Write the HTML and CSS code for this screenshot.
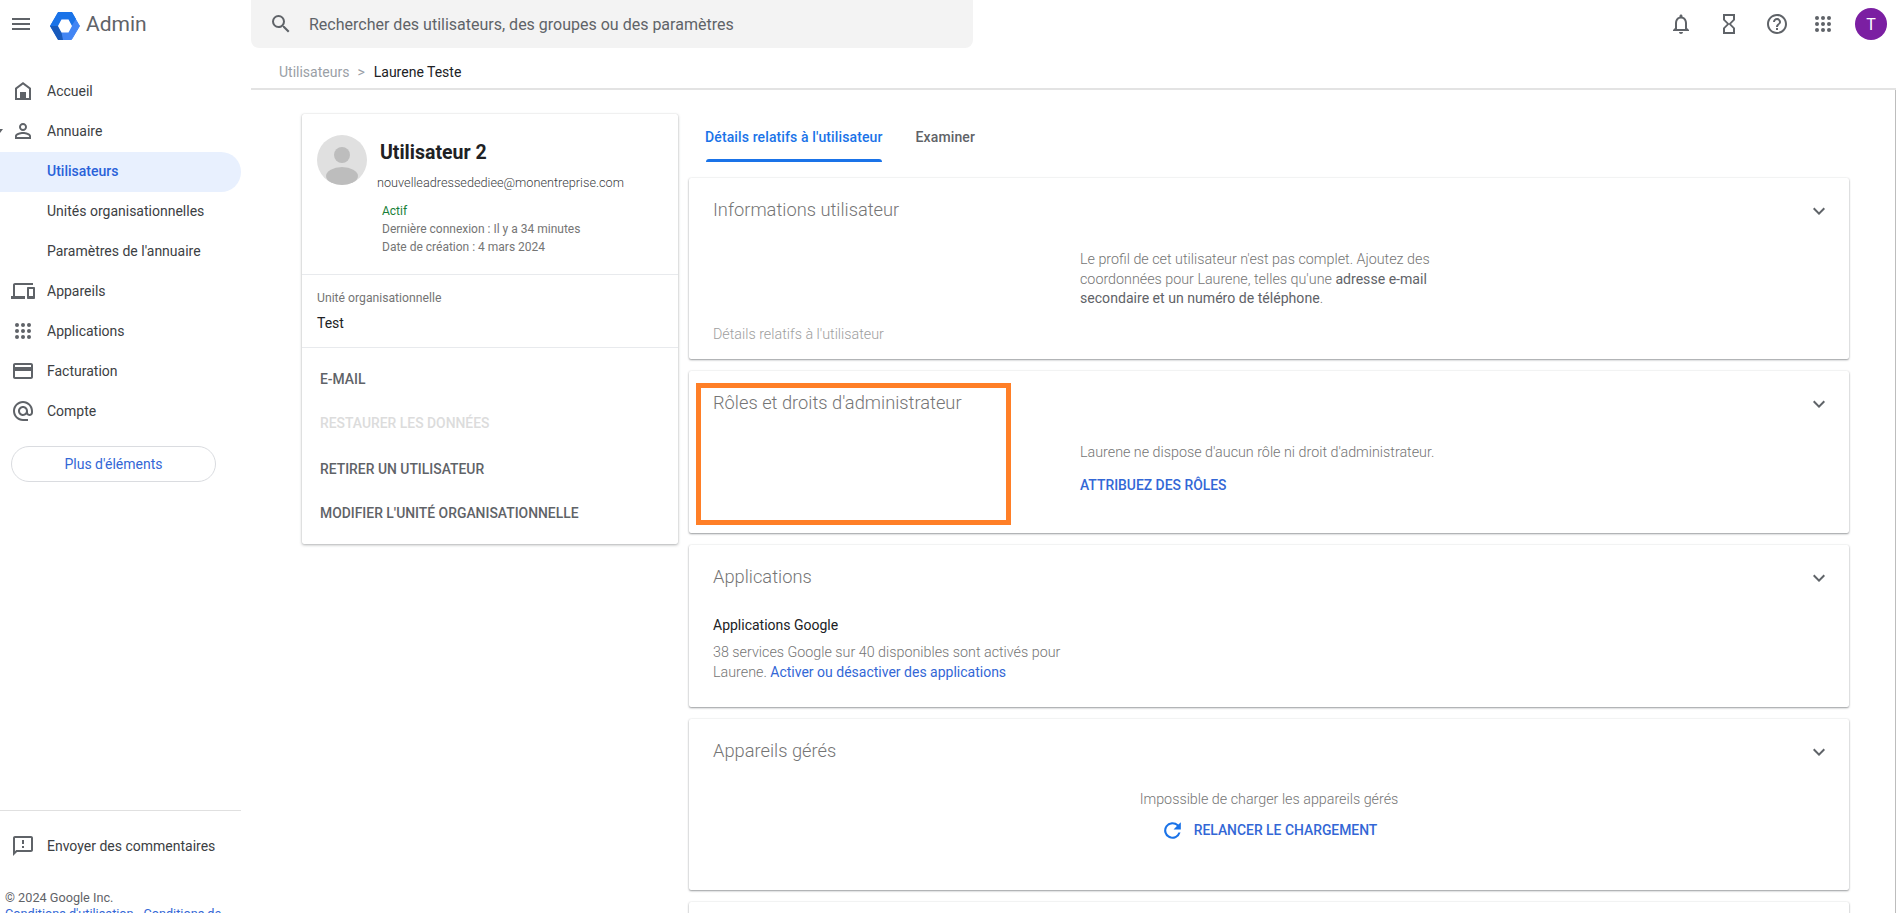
FILE: index.html
```html
<!DOCTYPE html>
<html lang="fr">
<head>
<meta charset="utf-8">
<title>Admin</title>
<link rel="stylesheet" href="styles.css">
</head>
<body>
<div class="app">
  <aside class="side">
    <div class="brand">
      <svg class="menu" viewBox="0 0 18 12"><path d="M0 0h18v2H0zM0 5h18v2H0zM0 10h18v2H0z"/></svg>
      <svg class="logo" viewBox="0 0 30 28"><path fill="#4285f4" stroke="#4285f4" stroke-width="1" stroke-linejoin="round" d="M8.500 .5h13L29.500 14l-8 13.500h-13L.5 14z"/><path fill="#1a73e8" d="M8 0h14l4 7-4.500 7-3-6.500h-7L8 14H0z"/><path fill="#185abc" d="M0 14h8l3.500 6.500 1.500 7.500H8z"/><path fill="#fff" d="M11.500 7.500h7l3.500 6.500-3.500 6.500h-7L8 14z"/></svg>
      <span class="brand-name">Admin</span>
    </div>
    <nav class="nav">
      <a class="nav-item"><svg class="ico" viewBox="0 0 24 24"><path d="M12 3 4 9v12h16V9zm6 16h-3v-6H9v6H6v-9l6-4.500 6 4.500z"/><path d="M10 14h4v6h-4z"/></svg>Accueil</a>
      <a class="nav-item"><span class="caret"></span><svg class="ico" viewBox="0 0 24 24"><path d="M12 5.900a2.100 2.100 0 1 1 0 4.200 2.100 2.100 0 0 1 0-4.200m0 9c2.970 0 6.100 1.460 6.100 2.100v1.100H5.900V17c0-.64 3.130-2.100 6.100-2.100M12 4C9.790 4 8 5.790 8 8s1.790 4 4 4 4-1.790 4-4-1.790-4-4-4zm0 9c-2.670 0-8 1.340-8 4v3h16v-3c0-2.660-5.330-4-8-4z"/></svg>Annuaire</a>
      <a class="nav-item sub active">Utilisateurs</a>
      <a class="nav-item sub">Unités organisationnelles</a>
      <a class="nav-item sub">Paramètres de l'annuaire</a>
      <a class="nav-item"><svg class="ico" viewBox="0 0 24 24"><path d="M4 6h18V4H4c-1.100 0-2 .9-2 2v11H0v3h14v-3H4V6zm19 2h-6c-.55 0-1 .45-1 1v10c0 .55.45 1 1 1h6c.55 0 1-.45 1-1V9c0-.55-.45-1-1-1zm-1 9h-4v-7h4v7z"/></svg>Appareils</a>
      <a class="nav-item"><svg class="ico" viewBox="0 0 24 24"><circle cx="6" cy="6" r="2"/><circle cx="12" cy="6" r="2"/><circle cx="18" cy="6" r="2"/><circle cx="6" cy="12" r="2"/><circle cx="12" cy="12" r="2"/><circle cx="18" cy="12" r="2"/><circle cx="6" cy="18" r="2"/><circle cx="12" cy="18" r="2"/><circle cx="18" cy="18" r="2"/></svg>Applications</a>
      <a class="nav-item"><svg class="ico" viewBox="0 0 24 24"><path d="M20 4H4c-1.110 0-1.990.89-1.990 2L2 18c0 1.110.89 2 2 2h16c1.110 0 2-.89 2-2V6c0-1.110-.89-2-2-2zm0 14H4v-6h16v6zm0-10H4V6h16v2z"/></svg>Facturation</a>
      <a class="nav-item"><svg class="ico" viewBox="0 0 24 24"><path d="M12 2C6.480 2 2 6.480 2 12s4.480 10 10 10h5v-2h-5c-4.340 0-8-3.660-8-8s3.660-8 8-8 8 3.660 8 8v1.430c0 .79-.71 1.570-1.500 1.570s-1.500-.78-1.500-1.570V12c0-2.760-2.240-5-5-5s-5 2.240-5 5 2.240 5 5 5c1.380 0 2.640-.56 3.540-1.470.65.89 1.770 1.470 2.960 1.470 1.970 0 3.500-1.600 3.500-3.570V12c0-5.520-4.480-10-10-10zm0 13c-1.660 0-3-1.340-3-3s1.340-3 3-3 3 1.340 3 3-1.340 3-3 3z"/></svg>Compte</a>
    </nav>
    <button class="more">Plus d'éléments</button>
    <div class="side-spacer"></div>
    <a class="nav-item feedback"><svg class="ico" viewBox="0 0 24 24"><path d="M20 2H4c-1.100 0-1.990.9-1.990 2L2 22l4-4h14c1.100 0 2-.9 2-2V4c0-1.100-.9-2-2-2zm0 14H5.170L4 17.170V4h16v12zm-9-4h2v2h-2zm0-6h2v4h-2z"/></svg>Envoyer des commentaires</a>
    <div class="legal">
      <div>© 2024 Google Inc.</div>
      <div class="legal-links">Conditions d'utilisation - Conditions de</div>
    </div>
  </aside>

  <main class="main">
    <header class="top">
      <div class="search">
        <svg class="search-ico" viewBox="0 0 24 24"><path d="M15.500 14h-.79l-.28-.27A6.471 6.471 0 0 0 16 9.500 6.500 6.500 0 1 0 9.500 16c1.610 0 3.090-.59 4.230-1.570l.27.28v.79l5 4.990L20.490 19l-4.990-5zm-6 0C7.010 14 5 11.990 5 9.500S7.010 5 9.500 5 14 7.010 14 9.500 11.990 14 9.500 14z"/></svg>
        <span>Rechercher des utilisateurs, des groupes ou des paramètres</span>
      </div>
      <div class="top-icons">
        <svg class="top-ico" viewBox="0 0 24 24"><path d="M12 22c1.100 0 2-.9 2-2h-4c0 1.100.9 2 2 2zm6-6v-5c0-3.070-1.630-5.640-4.500-6.320V4c0-.83-.67-1.500-1.500-1.500s-1.500.67-1.500 1.500v.68C7.640 5.360 6 7.920 6 11v5l-2 2v1h16v-1l-2-2zm-2 1H8v-6c0-2.480 1.510-4.500 4-4.500s4 2.020 4 4.500v6z"/></svg>
        <svg class="top-ico" viewBox="0 0 24 24"><path d="M6 2v6h.01L6 8.010 10 12l-4 4 .01.01H6V22h12v-5.990h-.01L18 16l-4-4 4-3.990-.01-.01H18V2H6zm10 14.500V20H8v-3.500l4-4 4 4zm-4-5-4-4V4h8v3.500l-4 4z"/></svg>
        <svg class="top-ico gap-help" viewBox="0 0 24 24"><path d="M11 18h2v-2h-2v2zm1-16C6.480 2 2 6.480 2 12s4.480 10 10 10 10-4.480 10-10S17.520 2 12 2zm0 18c-4.410 0-8-3.590-8-8s3.590-8 8-8 8 3.590 8 8-3.590 8-8 8zm0-14c-2.210 0-4 1.790-4 4h2c0-1.100.9-2 2-2s2 .9 2 2c0 2-3 1.750-3 5h2c0-2.250 3-2.500 3-5 0-2.210-1.790-4-4-4z"/></svg>
        <svg class="top-ico gap-apps" viewBox="0 0 24 24"><circle cx="6" cy="6" r="2"/><circle cx="12" cy="6" r="2"/><circle cx="18" cy="6" r="2"/><circle cx="6" cy="12" r="2"/><circle cx="12" cy="12" r="2"/><circle cx="18" cy="12" r="2"/><circle cx="6" cy="18" r="2"/><circle cx="12" cy="18" r="2"/><circle cx="18" cy="18" r="2"/></svg>
        <div class="avatar-t">T</div>
      </div>
    </header>
    <div class="crumb"><span class="crumb-link">Utilisateurs</span><span class="crumb-sep">&gt;</span><span class="crumb-cur">Laurene Teste</span></div>

    <div class="content">
      <section class="profile">
        <div class="profile-head">
          <svg class="avatar" viewBox="0 0 50 50"><circle cx="25" cy="25" r="25" fill="#e0e0e0"/><circle cx="25" cy="20" r="8" fill="#bdbdbd"/><ellipse cx="25" cy="41" rx="16" ry="9" fill="#bdbdbd"/></svg>
          <div class="profile-id">
            <div class="name">Utilisateur 2</div>
            <div class="mail">nouvelleadressedediee@monentreprise.com</div>
            <div class="meta">
              <div class="status">Actif</div>
              <div>Dernière connexion : Il y a 34 minutes</div>
              <div>Date de création : 4 mars 2024</div>
            </div>
          </div>
        </div>
        <div class="org">
          <div class="org-label">Unité organisationnelle</div>
          <div class="org-value">Test</div>
        </div>
        <div class="actions">
          <a class="action a1">E-MAIL</a>
          <a class="action a2 disabled">RESTAURER LES DONNÉES</a>
          <a class="action a3">RETIRER UN UTILISATEUR</a>
          <a class="action a4">MODIFIER L'UNITÉ ORGANISATIONNELLE</a>
        </div>
      </section>

      <div class="details">
        <div class="tabs">
          <a class="tab selected">Détails relatifs à l'utilisateur</a>
          <a class="tab">Examiner</a>
        </div>

        <section class="card c1">
          <div class="card-head"><h2>Informations utilisateur</h2><svg class="chev" viewBox="0 0 12 8"><path d="M1.400.6 6 5.200 10.600.6 12 2 6 8 0 2z"/></svg></div>
          <div class="split">
            <div class="info-foot">Détails relatifs à l'utilisateur</div>
            <p class="copy">Le profil de cet utilisateur n'est pas complet. Ajoutez des coordonnées pour Laurene, telles qu'une <b>adresse e-mail secondaire et un numéro de téléphone</b>.</p>
          </div>
        </section>

        <section class="card c2">
          <div class="highlight"></div>
          <div class="card-head"><h2>Rôles et droits d'administrateur</h2><svg class="chev" viewBox="0 0 12 8"><path d="M1.400.6 6 5.200 10.600.6 12 2 6 8 0 2z"/></svg></div>
          <div class="split">
            <div></div>
            <div class="roles">
              <p class="copy one">Laurene ne dispose d'aucun rôle ni droit d'administrateur.</p>
              <a class="cta">ATTRIBUEZ DES RÔLES</a>
            </div>
          </div>
        </section>

        <section class="card c3">
          <div class="card-head"><h2>Applications</h2><svg class="chev" viewBox="0 0 12 8"><path d="M1.400.6 6 5.200 10.600.6 12 2 6 8 0 2z"/></svg></div>
          <div class="apps">
            <div class="apps-title">Applications Google</div>
            <p class="copy apps-text">38 services Google sur 40 disponibles sont activés pour Laurene. <a class="link">Activer ou désactiver des applications</a></p>
          </div>
        </section>

        <section class="card c4">
          <div class="card-head"><h2>Appareils gérés</h2><svg class="chev" viewBox="0 0 12 8"><path d="M1.400.6 6 5.200 10.600.6 12 2 6 8 0 2z"/></svg></div>
          <div class="devices">
            <div class="copy one">Impossible de charger les appareils gérés</div>
            <a class="cta reload"><svg class="reload-ico" viewBox="0 0 24 24"><path d="M17.650 6.350A8 8 0 1 0 19.730 14h-2.080A6 6 0 1 1 12 6c1.660 0 3.140.69 4.220 1.780L13 11h7V4z"/></svg>RELANCER LE CHARGEMENT</a>
          </div>
        </section>

        <section class="card c5"></section>
      </div>
    </div>
  </main>
</div>
</body>
</html>
```

FILE: styles.css
```css
* { box-sizing: border-box; }
html, body { margin: 0; height: 100%; overflow: hidden; background: #fff; }
body { font-family: Roboto, "Liberation Sans", sans-serif; color: #202124; }
a { display: block; }
p { margin: 0; }
h2 { margin: 0; font-weight: 300; }

.app { display: flex; height: 913px; overflow: hidden; }

/* Sidebar */
.side { width: 251px; flex: none; display: flex; flex-direction: column; height: 913px; overflow: hidden; }
.brand { display: flex; align-items: center; height: 48px; flex: none; padding-left: 12px; }
.menu { width: 18px; height: 12px; fill: #5f6368; }
.logo { width: 30px; height: 28px; margin: 3px 0 0 20px; }
.brand-name { font-size: 21px; color: #5f6368; margin-left: 6px; }
.nav { display: flex; flex-direction: column; width: 241px; padding-top: 24px; }
.nav-item { position: relative; display: flex; align-items: center; height: 40px; font-size: 14px; color: #3c4043; padding: 0 0 2px 47px; width: 241px; flex: none; }
.ico { position: absolute; left: 11px; top: 7px; width: 24px; height: 24px; fill: #5f6368; }
.caret { position: absolute; left: -3px; top: 17px; border: 3px solid transparent; border-top: 4px solid #5f6368; }
.active { background: #e8f0fe; color: #2962d9; font-weight: 500; border-radius: 0 20px 20px 0; }
.more { width: 205px; height: 36px; margin: 14px 0 0 11px; flex: none; background: #fff; border: 1px solid #dadce0; border-radius: 18px; color: #3367d6; font: 400 14px Roboto, sans-serif; padding: 0; }
.side-spacer { flex: 1; }
.feedback { border-top: 1px solid #e0e0e0; height: 80px; padding-bottom: 9px; }
.feedback .ico { top: 23px; }
.legal { height: 23px; flex: none; padding-left: 5px; font-size: 12.700px; line-height: 16px; color: #5f6368; overflow: hidden; }
.legal-links { color: #3367d6; white-space: nowrap; }

/* Main */
.main { flex: 1; min-width: 0; display: flex; flex-direction: column; height: 913px; }
.top { display: flex; align-items: flex-start; height: 48px; flex: none; }
.search { display: flex; align-items: center; width: 722px; height: 48px; background: #f3f3f3; border-radius: 0 0 8px 8px; padding-left: 18px; color: #5f6368; font-size: 16px; flex: none; }
.search-ico { width: 24px; height: 24px; fill: #5f6368; margin-right: 16px; }
.top-icons { margin-left: auto; display: flex; align-items: center; height: 48px; }
.top-ico { width: 24px; height: 24px; fill: #5f6368; margin-right: 24px; }
.gap-help { margin-right: 22px; }
.gap-apps { margin-right: 20px; }
.avatar-t { width: 32px; height: 32px; border-radius: 50%; background: #7b1fa2; color: #fff; font-size: 16px; display: flex; align-items: center; justify-content: center; margin-right: 9px; }
.crumb { display: flex; align-items: center; height: 42px; flex: none; border-bottom: 2px solid #e3e3e3; padding: 7px 0 0 28px; font-size: 14px; }
.crumb-link { color: #9aa0a6; }
.crumb-sep { color: #9aa0a6; margin: 0 9px 0 8px; font-size: 14px; }
.crumb-cur { color: #202124; }

.content { flex: 1; display: flex; align-items: flex-start; gap: 11px; padding: 24px 0 0 51px; border-right: 1px solid #bdbdbd; min-height: 0; overflow: hidden; }

/* Profile card */
.profile { width: 376px; height: 430px; flex: none; background: #fff; border-radius: 2px; box-shadow: 0 1px 3px rgba(60,64,67,.4), 0 0 1px rgba(60,64,67,.2); }
.profile-head { display: flex; height: 161px; border-bottom: 1px solid #e8eaed; padding: 21px 0 0 15px; }
.avatar { width: 50px; height: 50px; flex: none; }
.profile-id { margin-left: 10px; }
.name { font-size: 19.500px; font-weight: 700; line-height: 22px; margin: 7px 0 0 3px; color: #202124; }
.mail { font-size: 12.700px; line-height: 18px; margin-top: 10px; color: #3c4043; white-space: nowrap; font-weight: 300; }
.meta { margin: 10px 0 0 5px; font-size: 12px; line-height: 18px; color: #757575; }
.status { color: #188038; }
.org { height: 73px; border-bottom: 1px solid #e8eaed; padding: 14px 0 0 15px; }
.org-label { font-size: 12.200px; line-height: 18px; color: #757575; }
.org-value { font-size: 14px; line-height: 18px; margin-top: 7px; color: #202124; }
.actions { padding-left: 18px; }
.action { font-size: 13.900px; font-weight: 500; line-height: 16px; color: #5f6368; }
.a1 { margin-top: 23px; }
.a2 { margin-top: 28px; }
.a3 { margin-top: 30px; }
.a4 { margin-top: 28px; }
.disabled { color: #dcdcdc; }

/* Tabs + cards */
.details { width: 1160px; flex: none; display: flex; flex-direction: column; height: 900px; }
.tabs { display: flex; height: 48px; margin: -1px 0 17px; padding-left: 16px; flex: none; }
.tab { font-size: 14px; font-weight: 500; letter-spacing: .12px; line-height: 16px; color: #5f6368; padding-top: 16px; margin-right: 33px; height: 49px; }
.tab.selected { color: #1a73e8; position: relative; }
.tab.selected::after { content: ""; position: absolute; left: 1px; right: 1px; bottom: 0; height: 3px; background: #1a73e8; border-radius: 3px 3px 0 0; }
.card { position: relative; background: #fff; border-radius: 2px; box-shadow: 0 1px 2px rgba(60,64,67,.5), 0 0 2px rgba(60,64,67,.12); margin-bottom: 12px; flex: none; }
.c1 { height: 181px; }
.c2 { height: 162px; }
.c3 { height: 162px; }
.c4 { height: 171px; }
.c5 { height: 60px; }
.card-head { display: flex; justify-content: space-between; align-items: center; height: 64px; padding: 0 24px; }
h2 { font-size: 18.300px; color: #757575; line-height: 24px; }
.chev { width: 12px; height: 8px; fill: #5f6368; margin-top: 2px; }
.split { display: grid; grid-template-columns: 391px 1fr; }
.copy { font-size: 14.300px; line-height: 19.500px; color: #757575; font-weight: 300; width: 375px; margin: 8px 0 0; }
.copy b { font-size: 14.100px; font-weight: 400; color: #5f6368; }
.info-foot { font-size: 14.300px; font-weight: 300; color: #9e9e9e; line-height: 18px; margin: 83px 0 0 24px; white-space: nowrap; }
.copy.one { width: auto; margin: 0; }
.roles { padding-top: 8px; }
.cta { font-size: 13.900px; font-weight: 500; color: #3367d6; line-height: 16px; margin-top: 14px; }

.highlight { position: absolute; left: 7px; top: 12px; width: 315px; height: 142px; border: 5px solid #ff7f27; }

.apps { padding-left: 24px; }
.apps-title { font-size: 14px; line-height: 18px; color: #202124; margin-top: 7px; }
.apps-text { width: 360px; margin-top: 9px; }
.link { display: inline; font-size: 14px; color: #3367d6; font-weight: 400; }
.devices { display: flex; flex-direction: column; align-items: center; padding-top: 7px; }
.reload { display: flex; align-items: center; margin-top: 8px; margin-left: -1px; }
.reload-ico { width: 25px; height: 25px; fill: #1a73e8; margin-right: 9px; }
```
